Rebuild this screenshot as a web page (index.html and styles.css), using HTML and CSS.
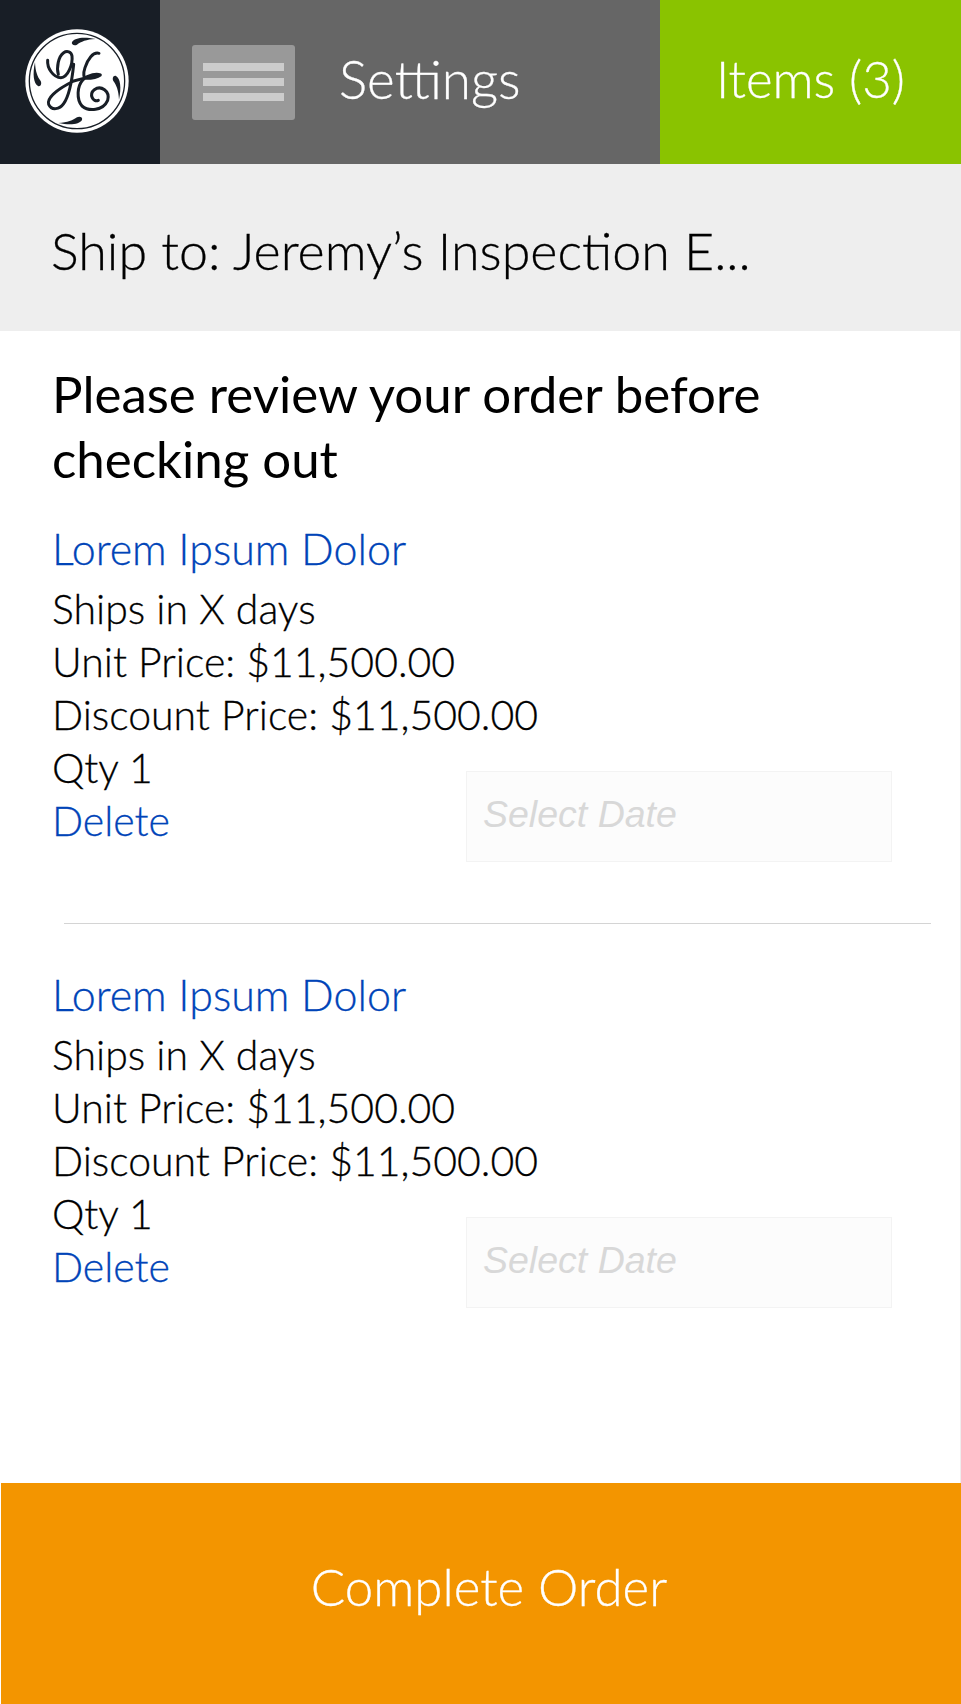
FILE: index.html
```html
<!DOCTYPE html>
<html>
<head>
    <title>Review Order</title>
    <link rel="stylesheet" href="styles.css">
</head>
<body>
    <div id="page">
        <div class="top-bar">
            <div class="logo-cell">
                <svg class="logo" viewBox="0 0 360 360">
                    <circle cx="180" cy="180" r="155" fill="#fff"/>
                    <circle cx="180" cy="180" r="143" fill="none" stroke="#181e26" stroke-width="4"/>
                    <g fill="#181e26">
                        <path id="sw" d="M165 63C172 50 200 46 236 54C208 55 192 62 180 71C172 75 162 71 165 63Z"/>
                        <use href="#sw" transform="rotate(90 180 180)"/>
                        <use href="#sw" transform="rotate(180 180 180)"/>
                        <use href="#sw" transform="rotate(270 180 180)"/>
                    </g>
                    <g fill="none" stroke="#181e26" stroke-width="9" stroke-linecap="round" stroke-linejoin="round">
                        <path d="M92 118C90 140 108 170 132 170C152 170 168 130 165 105C163 92 150 88 140 95C124 106 118 140 124 160"/>
                        <path d="M170 130C166 170 158 222 140 248C128 265 104 270 95 250C88 228 130 200 170 180L200 172"/>
                        <path d="M246 97C228 92 212 115 204 140C198 158 200 170 206 172C222 172 240 170 250 162C240 158 215 160 198 176C180 195 178 235 195 255C215 272 258 270 272 238C280 210 252 192 232 206C215 220 228 245 244 238"/>
                    </g>
                </svg>
            </div>
            <div class="settings-cell">
                <div class="menu-btn">
                    <span class="menu-line"></span>
                    <span class="menu-line"></span>
                    <span class="menu-line"></span>
                </div>
                <span class="settings-label">Settings</span>
            </div>
            <div class="items-cell">Items (3)</div>
        </div>

        <div class="ship-bar">Ship to: Jeremy’s Inspection E...</div>

        <div class="content">
            <h1 class="review-title">Please review your order before checking out</h1>

            <div class="item">
                <div class="item-info">
                    <a class="item-name">Lorem Ipsum Dolor</a>
                    <div class="item-line">Ships in X days</div>
                    <div class="item-line">Unit Price: $11,500.00</div>
                    <div class="item-line">Discount Price: $11,500.00</div>
                    <div class="item-line">Qty 1</div>
                    <a class="item-delete">Delete</a>
                </div>
                <div class="date-box">Select Date</div>
            </div>

            <hr class="item-sep">

            <div class="item">
                <div class="item-info">
                    <a class="item-name">Lorem Ipsum Dolor</a>
                    <div class="item-line">Ships in X days</div>
                    <div class="item-line">Unit Price: $11,500.00</div>
                    <div class="item-line">Discount Price: $11,500.00</div>
                    <div class="item-line">Qty 1</div>
                    <a class="item-delete">Delete</a>
                </div>
                <div class="date-box">Select Date</div>
            </div>
        </div>

        <div class="complete-btn">Complete Order</div>
    </div>
</body>
</html>
```

FILE: styles.css
```css
body {
    margin: 0;
    padding: 0;
    background-color: #fff;
    font-family: Lato, Arial, sans-serif;
    font-weight: 300;
    -webkit-text-stroke: 0.3px;
    color: #000;
}
#page {
    display: flex;
    flex-direction: column;
    height: 1704px;
    overflow: hidden;
}
.top-bar {
    display: flex;
    flex: none;
    height: 164px;
    color: #fff;
}
.logo-cell {
    width: 160px;
    background-color: #181e26;
    display: flex;
    padding-left: 17px;
    padding-top: 21px;
    box-sizing: border-box;
}
.logo {
    width: 120px;
    height: 120px;
}
.settings-cell {
    width: 500px;
    background-color: #666;
    display: flex;
    align-items: center;
    padding-left: 32px;
    box-sizing: border-box;
}
.menu-btn {
    width: 103px;
    height: 75px;
    background-color: #999;
    border-radius: 3px;
    display: flex;
    flex-direction: column;
    align-items: center;
    justify-content: center;
    gap: 7px;
}
.menu-line {
    width: 81px;
    height: 8px;
    background-color: #ccc;
}
.settings-label {
    margin-left: 44px;
    padding-bottom: 8px;
    font-size: 53px;
}
.items-cell {
    flex: 1;
    background-color: #8ac300;
    display: flex;
    align-items: center;
    justify-content: center;
    padding-bottom: 8px;
    font-size: 51px;
}
.ship-bar {
    flex: none;
    height: 167px;
    box-sizing: border-box;
    padding: 6px 0 0 51px;
    line-height: 161px;
    background-color: #eee;
    font-size: 52px;
}
.content {
    flex: 1;
    padding-left: 52px;
    border-right: 1px solid #eee;
}
.review-title {
    margin: 30px 0 0 0;
    width: 780px;
    font-size: 51px;
    line-height: 65px;
    font-weight: 400;
    -webkit-text-stroke: 0;
}
.item {
    display: flex;
    justify-content: space-between;
    margin-top: 29px;
    padding-right: 68px;
}
.item-info {
    flex: none;
    width: 413px;
    white-space: nowrap;
}
.item-name, .item-delete {
    display: block;
    color: #0044b8;
}
.item-name {
    font-size: 43px;
    line-height: 58px;
    margin-bottom: 4px;
}
.item-line, .item-delete {
    font-size: 41px;
    line-height: 53px;
}
.date-box {
    flex: none;
    width: 426px;
    height: 91px;
    margin-top: 251px;
    padding: 0 0 5px 16px;
    box-sizing: border-box;
    display: flex;
    align-items: center;
    background-color: #fcfcfc;
    border: 1px solid #f3f3f3;
    font-family: "Liberation Sans", Arial, sans-serif;
    font-style: italic;
    font-weight: 400;
    font-size: 37.5px;
    -webkit-text-stroke: 0;
    color: #d8d8d8;
}
.item-sep {
    margin: 61px 29px 42px 12px;
    border: none;
    border-top: 1px solid #d4d4d4;
}
.item-sep + .item {
    margin-top: 42px;
}
.complete-btn {
    flex: none;
    height: 221px;
    margin-left: 1px;
    padding: 0 0 14px 16px;
    box-sizing: border-box;
    background-color: #f39500;
    color: #fff;
    font-size: 51px;
    display: flex;
    align-items: center;
    justify-content: center;
}
```
